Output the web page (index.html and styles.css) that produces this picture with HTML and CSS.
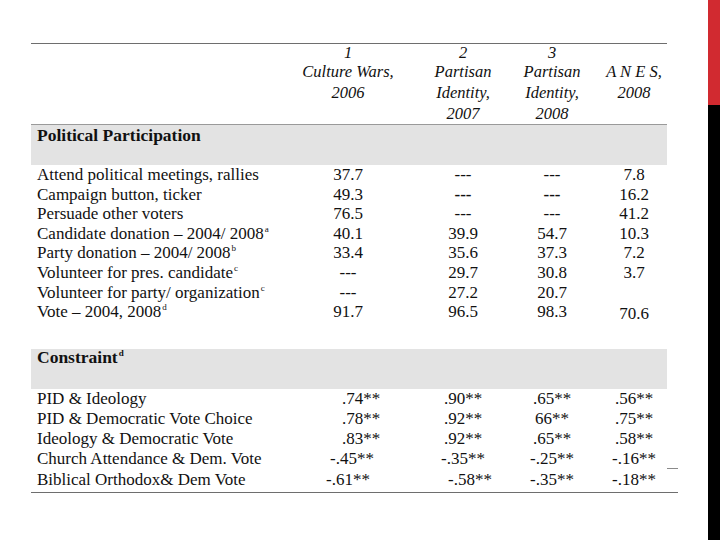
FILE: index.html
```html
<!DOCTYPE html>
<html lang="en">
<head>
<meta charset="utf-8">
<title>Political Participation and Constraint</title>
<link rel="stylesheet" href="styles.css">
</head>
<body>
<div class="page">
  <main class="main">
    <div class="table">
      <div class="row head">
        <div class="cell label"></div>
        <div class="cell hcell c1"><span class="hl first">1</span><span class="hl">Culture Wars,</span><span class="hl">2006</span></div>
        <div class="cell hcell c2"><span class="hl first">2</span><span class="hl">Partisan</span><span class="hl">Identity,</span><span class="hl">2007</span></div>
        <div class="cell hcell c3"><span class="hl first">3</span><span class="hl">Partisan</span><span class="hl">Identity,</span><span class="hl">2008</span></div>
        <div class="cell hcell c4"><span class="hl first"></span><span class="hl">A N E S,</span><span class="hl">2008</span></div>
      </div>

      <div class="band band-first"><span class="band-title">Political Participation</span></div>

      <div class="rows part">
        <div class="row data"><div class="cell label">Attend political meetings, rallies</div><div class="cell c1">37.7</div><div class="cell c2">---</div><div class="cell c3">---</div><div class="cell c4">7.8</div></div>
        <div class="row data"><div class="cell label">Campaign button, ticker</div><div class="cell c1">49.3</div><div class="cell c2 heavy">---</div><div class="cell c3 heavy">---</div><div class="cell c4">16.2</div></div>
        <div class="row data"><div class="cell label">Persuade other voters</div><div class="cell c1">76.5</div><div class="cell c2">---</div><div class="cell c3">---</div><div class="cell c4">41.2</div></div>
        <div class="row data"><div class="cell label">Candidate donation – 2004/ 2008<sup class="sup">a</sup></div><div class="cell c1">40.1</div><div class="cell c2">39.9</div><div class="cell c3">54.7</div><div class="cell c4">10.3</div></div>
        <div class="row data"><div class="cell label">Party donation – 2004/ 2008<sup class="sup">b</sup></div><div class="cell c1">33.4</div><div class="cell c2">35.6</div><div class="cell c3">37.3</div><div class="cell c4">7.2</div></div>
        <div class="row data"><div class="cell label">Volunteer for pres. candidate<sup class="sup">c</sup></div><div class="cell c1">---</div><div class="cell c2">29.7</div><div class="cell c3">30.8</div><div class="cell c4">3.7</div></div>
        <div class="row data"><div class="cell label">Volunteer for party/ organization<sup class="sup">c</sup></div><div class="cell c1">---</div><div class="cell c2">27.2</div><div class="cell c3">20.7</div><div class="cell c4"></div></div>
        <div class="row data"><div class="cell label">Vote – 2004, 2008<sup class="sup">d</sup></div><div class="cell c1">91.7</div><div class="cell c2">96.5</div><div class="cell c3">98.3</div><div class="cell c4 low">70.6</div></div>
      </div>

      <div class="band band-second"><span class="band-title">Constraint<sup class="sup sup-bold">d</sup></span></div>

      <div class="rows cons">
        <div class="row data"><div class="cell label">PID &amp; Ideology</div><div class="cell c1 k1">.74**</div><div class="cell c2">.90**</div><div class="cell c3">.65**</div><div class="cell c4">.56**</div></div>
        <div class="row data"><div class="cell label">PID &amp; Democratic Vote Choice</div><div class="cell c1 k1">.78**</div><div class="cell c2">.92**</div><div class="cell c3">66**</div><div class="cell c4">.75**</div></div>
        <div class="row data"><div class="cell label">Ideology &amp; Democratic Vote</div><div class="cell c1 k1">.83**</div><div class="cell c2">.92**</div><div class="cell c3">.65**</div><div class="cell c4">.58**</div></div>
        <div class="row data tick"><div class="cell label">Church Attendance &amp; Dem. Vote</div><div class="cell c1 k2">-.45**</div><div class="cell c2">-.35**</div><div class="cell c3">-.25**</div><div class="cell c4">-.16**</div></div>
        <div class="row data"><div class="cell label">Biblical Orthodox&amp; Dem Vote</div><div class="cell c1">-.61**</div><div class="cell c2 shift">-.58**</div><div class="cell c3">-.35**</div><div class="cell c4">-.18**</div></div>
      </div>
    </div>
    <div class="bottom-rule"></div>
  </main>
  <aside class="side">
    <div class="side-red"></div>
    <div class="side-black"></div>
  </aside>
</div>
</body>
</html>
```

FILE: styles.css
```css
html, body {
  margin: 0;
  padding: 0;
  background: #ffffff;
}

body {
  font-family: "Liberation Serif", "Times New Roman", serif;
  color: #111111;
}

.page {
  display: flex;
  width: 720px;
  height: 540px;
  overflow: hidden;
}

.main {
  flex: 1;
  padding-top: 43px;
  padding-left: 31px;
}

.side {
  width: 12px;
  display: flex;
  flex-direction: column;
}

.side-red {
  height: 105px;
  background: #d12a30;
}

.side-black {
  flex: 1;
  background: #000000;
}

.table {
  width: 636px;
  border-top: 1px solid #6e6e6e;
}

.row {
  display: grid;
  grid-template-columns: 269px 96px 107px 98px 66px;
}

.cell {
  text-align: center;
  white-space: nowrap;
}

.cell.label {
  text-align: left;
  padding-left: 6px;
}

.c2 {
  padding-left: 27px;
}

/* header */
.head {
  font-style: italic;
  font-size: 16.5px;
}

.hcell {
  display: flex;
  flex-direction: column;
}

.hl {
  display: block;
  height: 21px;
  line-height: 21px;
}

.hl.first {
  height: 17px;
  line-height: 17px;
}

/* section bands */
.band {
  background: #e3e3e3;
  font-weight: bold;
  font-size: 17.5px;
  padding-left: 6px;
}

.band-first {
  border-top: 1px solid #9a9a9a;
  line-height: 20px;
  height: 20px;
  padding-bottom: 20px;
}

.band-second {
  margin-top: 27px;
  line-height: 16px;
  height: 16px;
  padding-bottom: 24px;
}

.band-title {
  display: inline-block;
}

/* data rows */
.data {
  font-size: 17px;
}

.part .data {
  height: 19.6px;
  line-height: 19.6px;
}

.cons .data {
  height: 20.2px;
  line-height: 20.2px;
}

.heavy {
  font-weight: bold;
}

.low {
  position: relative;
  top: 2px;
}

.k1 {
  padding-left: 26px;
}

.k2 {
  padding-left: 8px;
}

.shift {
  padding-left: 41px;
}

.sup {
  font-size: 9px;
  line-height: 0;
  vertical-align: 7px;
  margin-left: 1px;
}

.sup-bold {
  font-weight: bold;
}

.tick {
  position: relative;
}

.tick::after {
  content: "";
  position: absolute;
  right: -11px;
  top: 19px;
  width: 11px;
  height: 1px;
  background: #8a8a8a;
}

.bottom-rule {
  width: 647px;
  height: 1px;
  margin-top: 2px;
  background: #6e6e6e;
}
```
